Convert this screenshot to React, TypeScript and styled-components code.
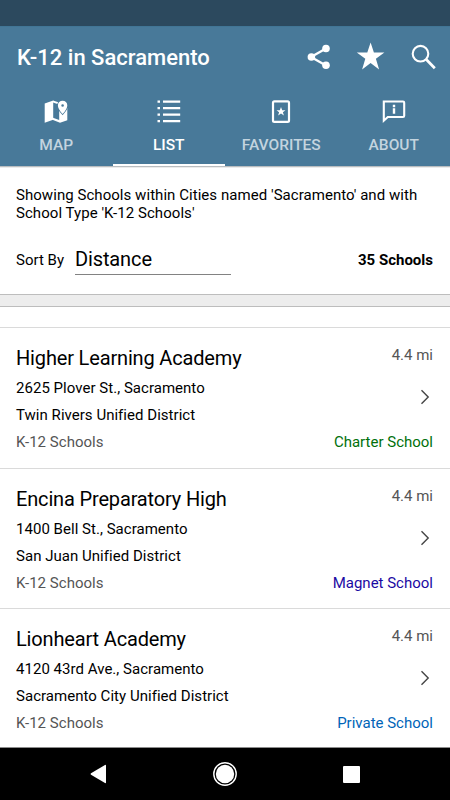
import React from 'react';
import styled, { createGlobalStyle } from 'styled-components';

const GlobalStyle = createGlobalStyle`
  * { box-sizing: border-box; }
  body { margin: 0; background: #fff; }
`;

const Screen = styled.div`
  width: 450px;
  height: 800px;
  display: flex;
  flex-direction: column;
  overflow: hidden;
  background: #fff;
  color: #000;
  font-family: Roboto, sans-serif;
  font-size: 15px;
`;

const StatusBar = styled.div`
  height: 26px;
  flex: none;
  background: #2c495e;
`;

const Header = styled.header`
  height: 140px;
  flex: none;
  background: #487999;
  border-top: 1px solid #417595;
  color: #fff;
`;

const Toolbar = styled.div`
  height: 61px;
  display: flex;
  align-items: center;
  padding: 0 13px 0 17px;
`;

const Title = styled.h1`
  margin: 0;
  padding-top: 1px;
  flex: 1;
  font-size: 22px;
  line-height: 26px;
  font-weight: 500;
  white-space: nowrap;
`;

const Actions = styled.div`
  display: flex;
  align-items: center;
  gap: 24px;
  padding-bottom: 2px;
`;

const Icon = styled.svg`
  display: block;
  flex: none;
  fill: currentColor;
`;

const Tabs = styled.nav`
  height: 78px;
  display: grid;
  grid-template-columns: repeat(4, 1fr);
`;

const Tab = styled.div<{ $active?: boolean }>`
  display: flex;
  flex-direction: column;
  align-items: center;
  padding-top: 12px;
  border-bottom: 2px solid ${(p) => (p.$active ? '#fff' : 'transparent')};
`;

const TabLabel = styled.span<{ $active?: boolean }>`
  margin-top: 12px;
  font-size: 15.5px;
  line-height: 18px;
  font-weight: 500;
  color: ${(p) => (p.$active ? '#fff' : '#c3d4df')};
`;

const Summary = styled.section`
  height: 129px;
  flex: none;
  padding: 20px 17px 0 16px;
  border-top: 1px solid #b9bdc0;
  border-bottom: 1px solid #bdbdbd;
  box-shadow: inset 0 1px 0 #ececec;
`;

const Description = styled.p`
  margin: 0;
  font-size: 15px;
  line-height: 17.6px;
  letter-spacing: 0.05px;
`;

const SortRow = styled.div`
  display: flex;
  align-items: center;
  height: 30px;
  margin-top: 23px;
`;

const SortField = styled.div`
  width: 156px;
  height: 30px;
  margin-left: 11px;
  font-size: 20px;
  line-height: 28px;
  letter-spacing: -0.12px;
  border-bottom: 1px solid #828282;
`;

const Count = styled.strong`
  margin-left: auto;
  font-weight: 700;
`;

const Divider = styled.div`
  height: 12px;
  flex: none;
  background: #ededed;
  border-bottom: 1px solid #bdbdbd;
`;

const List = styled.main`
  flex: 1;
  min-height: 0;
  overflow: hidden;
  padding-top: 20.4px;
`;

const Card = styled.article`
  height: 140.4px;
  display: flex;
  justify-content: space-between;
  padding: 17px 17px 0 16px;
  border-top: 1px solid #dadada;
`;

const Details = styled.div`
  display: flex;
  flex-direction: column;
`;

const SchoolName = styled.h2`
  margin: 0 0 4px;
  font-size: 20px;
  line-height: 26px;
  font-weight: 400;
  letter-spacing: -0.16px;
`;

const Line = styled.span<{ $muted?: boolean }>`
  line-height: 27px;
  letter-spacing: 0.03px;
  color: ${(p) => (p.$muted ? '#555' : '#000')};
`;

const Aside = styled.div`
  display: flex;
  flex-direction: column;
  align-items: flex-end;
`;

const Miles = styled.span`
  line-height: 20px;
  color: #555;
`;

const Kind = styled.span<{ $color: string }>`
  line-height: 27px;
  color: ${(p) => p.$color};
`;

const Chevron = styled(Icon)`
  margin: 24px 3px 24px 0;
`;

const NavBar = styled.footer`
  height: 53px;
  flex: none;
  display: flex;
  align-items: center;
  justify-content: space-between;
  padding: 0 90px;
  background: #000;
  color: #fff;
  border-top: 1px solid #8c8c8c;
`;

const tabs = [
  {
    label: 'MAP',
    icon: (
      <>
        <path d="M.7 3.4 9.2.6V19.8L.7 22.8Z" />
        <path d="M9 .6 15 2.6V4.4L9 2.6ZM9 17.8 15.2 20V10.5L23.3 8V20.2L16 22.8 9 20Z" />
        <path
          fillRule="evenodd"
          stroke="#487999"
          strokeWidth="1.6"
          paintOrder="stroke"
          d="M18.6.7A4.7 4.7 0 0 0 13.9 5.5Q13.9 9 18.6 14 23.3 9 23.3 5.5A4.7 4.7 0 0 0 18.6.7ZM18.6 4.2A1.3 1.3 0 1 1 18.6 6.8A1.3 1.3 0 1 1 18.6 4.2Z"
        />
      </>
    ),
  },
  {
    label: 'LIST',
    active: true,
    icon: (
      <path d="M.5 .6H3V2.8H.5ZM.5 7H3V9.2H.5ZM.5 13.5H3V15.7H.5ZM.5 20H3V22.2H.5ZM6 .6H23.2V2.8H6ZM6 7H23.2V9.2H6ZM6 13.5H23.2V15.7H6ZM6 20H23.2V22.2H6Z" />
    ),
  },
  {
    label: 'FAVORITES',
    icon: (
      <>
        <rect x="4" y="1.3" width="16" height="20.5" rx="1.4" fill="none" stroke="currentColor" strokeWidth="2.2" />
        <path d="m12 7 1.2 3.2h3.3l-2.6 2 1 3.2-2.9-1.9-2.9 1.9 1-3.2-2.6-2h3.3z" />
      </>
    ),
  },
  {
    label: 'ABOUT',
    icon: (
      <>
        <path d="M1.8 1.5H21Q22.2 1.5 22.2 2.7V15.7Q22.2 17 21 17H5.8L1.8 20.7Z" fill="none" stroke="currentColor" strokeWidth="2.1" />
        <path d="M10.8 4.8H13.2V7.2H10.8ZM10.8 8.2H13.2V13.8H10.8Z" />
      </>
    ),
  },
];

const schools = [
  { name: 'Higher Learning Academy', address: '2625 Plover St., Sacramento', district: 'Twin Rivers Unified District', kind: 'Charter School', color: '#00700b' },
  { name: 'Encina Preparatory High', address: '1400 Bell St., Sacramento', district: 'San Juan Unified District', kind: 'Magnet School', color: '#1b0aa3' },
  { name: 'Lionheart Academy', address: '4120 43rd Ave., Sacramento', district: 'Sacramento City Unified District', kind: 'Private School', color: '#0064b8' },
];

export default function App() {
  return (
    <Screen>
      <GlobalStyle />
      <StatusBar />
      <Header>
        <Toolbar>
          <Title>K-12 in Sacramento</Title>
          <Actions>
            <Icon width="24" height="28" viewBox="0 0 24 28">
              <path d="M19 5.5 4 14l15 8.5" fill="none" stroke="currentColor" strokeWidth="2.3" />
              <circle cx="19" cy="5.5" r="3.8" />
              <circle cx="4.4" cy="14" r="3.8" />
              <circle cx="19" cy="22.3" r="3.8" />
            </Icon>
            <Icon width="30" height="30" viewBox="0 0 30 30">
              <path d="m15.6.4 3.3 10h10.5l-8.5 6.4 3.2 10.7-8.5-6.4-8.5 6.4 3.2-10.7-8.5-6.4h10.5z" />
            </Icon>
            <Icon width="28" height="28" viewBox="0 0 28 28">
              <g fill="none" stroke="currentColor">
                <circle cx="11.5" cy="10.7" r="7.8" strokeWidth="2.1" />
                <path d="m17.3 16.5 8.5 8.8" strokeWidth="2.7" />
              </g>
            </Icon>
          </Actions>
        </Toolbar>
        <Tabs>
          {tabs.map((tab) => (
            <Tab key={tab.label} $active={tab.active}>
              <Icon width="24" height="24" viewBox="0 0 24 24">{tab.icon}</Icon>
              <TabLabel $active={tab.active}>{tab.label}</TabLabel>
            </Tab>
          ))}
        </Tabs>
      </Header>
      <Summary>
        <Description>Showing Schools within Cities named 'Sacramento' and with School Type 'K-12 Schools'</Description>
        <SortRow>
          <span>Sort By</span>
          <SortField>Distance</SortField>
          <Count>35 Schools</Count>
        </SortRow>
      </Summary>
      <Divider />
      <List>
        {schools.map((s) => (
          <Card key={s.name}>
            <Details>
              <SchoolName>{s.name}</SchoolName>
              <Line>{s.address}</Line>
              <Line>{s.district}</Line>
              <Line $muted>K-12 Schools</Line>
            </Details>
            <Aside>
              <Miles>4.4 mi</Miles>
              <Chevron width="10" height="16" viewBox="0 0 10 16">
                <path d="m1.5 1.3 6.7 6.7-6.7 6.7" fill="none" stroke="#444" strokeWidth="1.4" />
              </Chevron>
              <Kind $color={s.color}>{s.kind}</Kind>
            </Aside>
          </Card>
        ))}
      </List>
      <NavBar>
        <Icon width="16" height="20" viewBox="0 0 16 20">
          <path d="M16 1.5V18.5Q16 19.5 15 19L1 10.7Q0 10 1 9.3L15 1Q16 .5 16 1.5Z" />
        </Icon>
        <Icon width="26" height="26" viewBox="0 0 26 26">
          <circle cx="13" cy="13" r="11.2" fill="none" stroke="currentColor" strokeWidth="1.4" />
          <circle cx="13" cy="13" r="9.2" />
        </Icon>
        <Icon width="17" height="17" viewBox="0 0 17 17">
          <rect width="17" height="17" rx="1" />
        </Icon>
      </NavBar>
    </Screen>
  );
}
